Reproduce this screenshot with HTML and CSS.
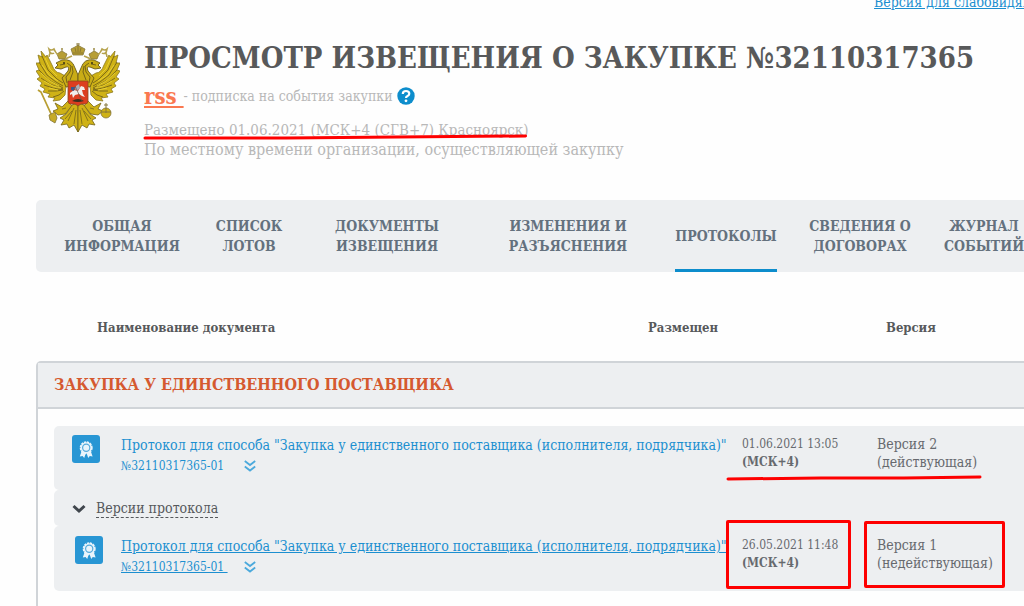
FILE: index.html
```html
<!DOCTYPE html>
<html lang="ru">
<head>
    <meta charset="UTF-8">
    <meta name="viewport" content="width=device-width, initial-scale=1.0">
    <title>Просмотр извещения о закупке №32110317365</title>
    <link rel="stylesheet" href="styles.css">
</head>
<body>
    <!-- Общие иконки -->
    <svg class="sprite" aria-hidden="true">
        <symbol id="icon-award" viewBox="0 0 28 28">
            <path d="M10 15l-2.200 6.500 2.800-.4 1.600 1.800L14.200 17l2 5.900 1.600-1.800 2.800.4-2.200-6.500z" fill="#e9f4fb"/>
            <circle cx="14.200" cy="12.800" r="5.600" fill="#e9f4fb" stroke="#e9f4fb" stroke-width="1.800" stroke-dasharray="2.200 .73"/>
            <circle cx="14.200" cy="12.800" r="3.600" fill="#e9f4fb" stroke="#56abdc" stroke-width="1.200"/>
        </symbol>
        <symbol id="icon-more" viewBox="0 0 12 12">
            <path d="M.8 1l5.200 4L11.200 1M.8 6.500l5.200 4 5.200-4" fill="none" stroke="#4ba9dc" stroke-width="1.800"/>
        </symbol>
    </svg>

    <div class="topbar">
        <a href="#">Версия для слабовидящих</a>
    </div>

    <header class="header">
        <svg class="emblem" viewBox="0 0 84 90" aria-hidden="true">
            <g id="half">
                <!-- крыло -->
                <path d="M31 34L29 52 24 57 17 58 19 55 12 54 14 51 7 49 9 46 4 43 6 40 1 36 4 34 0 28 3 27 0 20 4 20 2 12 6 14 5 8 10 14 11 12 16 22Q19 30 24 30z" fill="#cfb216" stroke="#8b7820" stroke-width=".8"/>
                <path d="M6 13l6 14 9 9 6 4M3 19l8 13 9 7 7 4M3 27l10 10 14 8M5 35l9 6 13 5M8 42l9 3 10 2M12 48l8 0 7-1M17 54l6-2 5-4" fill="none" stroke="#75641a" stroke-width=".9"/>
                <path d="M9 15l5 11 7 7M6 22l8 11 8 5M5 30l9 8 9 5M8 38l9 5 8 2M13 45l9 2" fill="none" stroke="#ead136" stroke-width=".9"/>
                <!-- шея и голова -->
                <path d="M42 42L30 44 26 35 32 28Q34 23 30 24L25 26 19 25 22 22 20 20 26 17Q36 15 39 25L42 32z" fill="#c9ac16" stroke="#6b5b18" stroke-width=".9"/>
                <path d="M31 20l4 3-1 6-4 5 1 6M36 23l1 6-3 8M24 22l5-1" fill="none" stroke="#6b5b18" stroke-width=".9"/>
                <circle cx="28" cy="20" r="1" fill="#3a3414"/>
                <!-- малая корона -->
                <path d="M23 16l-2-5 3-2 2-1 3 2 2 1-2 5z" fill="#b79e35" stroke="#85763a" stroke-width=".8"/>
                <path d="M26 5v3M25 6h2" stroke="#9b8a45" stroke-width="1"/>
                <path d="M22 12q-3-3-4-6-3 2-5 0l1 4q3 1 4 0M15 9q-2 2-2 5" fill="none" stroke="#b5a24d" stroke-width="1.600"/>
                <!-- лапа и хвост -->
                <path d="M32 58L26 64 19 60 22 66 17 68 22 72 29 71 36 63z" fill="#cfb216" stroke="#75651a" stroke-width=".8"/>
                <path d="M36 62L30 71 24 75 28 77 25 82 31 81 33 85 38 82 42 89 42 60z" fill="#cfb216" stroke="#75651a" stroke-width=".8"/>
                <path d="M38 65l-6 13M40 67l-2 14M26 66l4-1M36 68l-7 8" stroke="#75651a" stroke-width=".8"/>
            </g>
            <use href="#half" transform="translate(84 0) scale(-1 1)"/>
            <!-- большая корона -->
            <path d="M37 12l-2-6 4-2 3-2 3 2 4 2-2 6z" fill="#b79e35" stroke="#85763a" stroke-width=".8"/>
            <path d="M42 0v9M40 1h4M37 10h10M39 5l1 4M45 5l-1 4" stroke="#80702e" stroke-width=".8"/>
            <path d="M36 13l-7 3M48 13l7 3" stroke="#b5a24d" stroke-width="1.600"/>
            <!-- скипетр и держава -->
            <path d="M2 47l3 2 11 24" fill="none" stroke="#b89e32" stroke-width="1.800"/>
            <path d="M13 72l6-3 2 6-2 5-5-3z" fill="#c6ab28" stroke="#85763a" stroke-width=".8"/>
            <circle cx="70" cy="70" r="5" fill="#cfb216" stroke="#85763a" stroke-width=".8"/>
            <path d="M70 60v10M65 69h10M68 62h4" stroke="#85763a" stroke-width="1"/>
            <!-- щит -->
            <path d="M32 38h20v20q0 3-3 3h-4l-3 2-3-2h-4q-3 0-3-3z" fill="#dc3e20" stroke="#8c4b1c" stroke-width=".8"/>
            <path d="M34 50l4-3 4 1 3-5 3 1 1 3-3 0 1 4 2 3-3-1-3-2-4 1-2 3-1-4-2 1z" fill="#f1efec"/>
            <path d="M40 43l3-2 1 4-3 3-2-2z" fill="#a8afb8"/>
            <path d="M35 44l4 0-1 4-3-1z" fill="#38598a"/>
            <path d="M36 58q6-4 12 0-6 2-12 0" fill="#3d3020"/>
            <path d="M39 43l7 15" stroke="#6b5346" stroke-width=".7"/>
        </svg>
        <div class="header-text">
            <h1>ПРОСМОТР ИЗВЕЩЕНИЯ О ЗАКУПКЕ №32110317365</h1>
            <p class="subscribe">
                <a class="rss" href="#">rss&nbsp;</a>
                <span>- подписка на события закупки</span>
                <button class="help" type="button" aria-label="Справка">
                    <svg viewBox="0 0 18 18">
                        <circle cx="9" cy="9" r="8.700" fill="#0d8dcc"/>
                        <path d="M5.800 7Q5.800 4 9 4t3.300 2.700Q12.300 8 10.500 9 9 9.700 9 11" fill="none" stroke="#fff" stroke-width="2.200"/>
                        <circle cx="9" cy="13.800" r="1.400" fill="#fff"/>
                    </svg>
                </button>
            </p>
            <p class="placed">
                <span class="marked">Размещено 01.06.2021 (МСК+4 (СГВ+7) Красноярск)
                    <svg class="mark-line" viewBox="0 0 380 6" preserveAspectRatio="none" aria-hidden="true"><path d="M1 4L140 4 250 3 377 2"/></svg>
                </span>
            </p>
            <p class="local-time">По местному времени организации, осуществляющей закупку</p>
        </div>
    </header>

    <nav class="tabs">
        <a href="#">ОБЩАЯ<br>ИНФОРМАЦИЯ</a>
        <a href="#">СПИСОК<br>ЛОТОВ</a>
        <a href="#">ДОКУМЕНТЫ<br>ИЗВЕЩЕНИЯ</a>
        <a href="#">ИЗМЕНЕНИЯ И<br>РАЗЪЯСНЕНИЯ</a>
        <a class="active" href="#">ПРОТОКОЛЫ</a>
        <a href="#">СВЕДЕНИЯ О<br>ДОГОВОРАХ</a>
        <a href="#">ЖУРНАЛ<br>СОБЫТИЙ</a>
    </nav>

    <table class="columns">
        <tr>
            <th class="col-name">Наименование документа</th>
            <th class="col-date">Размещен</th>
            <th>Версия</th>
        </tr>
    </table>

    <section class="panel">
        <h2>ЗАКУПКА У ЕДИНСТВЕННОГО ПОСТАВЩИКА</h2>
        <table class="protocols">
            <tr class="current">
                <td class="cell-icon"><svg class="award"><use href="#icon-award"/></svg></td>
                <td class="cell-name">
                    <a href="#">Протокол для способа "Закупка у единственного поставщика (исполнителя, подрядчика)"<br><span class="number">№32110317365-01&nbsp;</span></a>
                    <button class="more" type="button" aria-label="Подробнее"><svg><use href="#icon-more"/></svg></button>
                </td>
                <td class="cell-date">
                    01.06.2021 13:05<br><b>(МСК+4)</b>
                    <svg class="mark-row" viewBox="0 0 258 6" preserveAspectRatio="none" aria-hidden="true"><path d="M2 4L95 3 178 3 254 2"/></svg>
                </td>
                <td class="cell-version">Версия 2<br>(действующая)</td>
            </tr>
            <tr class="versions">
                <td colspan="4">
                    <button class="toggle" type="button">
                        <svg viewBox="0 0 14 10" aria-hidden="true"><path d="M1.500 2L7 7l5.500-5" fill="none" stroke="#40464d" stroke-width="3"/></svg>
                        <span>Версии протокола</span>
                    </button>
                </td>
            </tr>
            <tr class="old">
                <td class="cell-icon"><svg class="award"><use href="#icon-award"/></svg></td>
                <td class="cell-name">
                    <a href="#">Протокол для способа "Закупка у единственного поставщика (исполнителя, подрядчика)"<br><span class="number">№32110317365-01&nbsp;</span></a>
                    <button class="more" type="button" aria-label="Подробнее"><svg><use href="#icon-more"/></svg></button>
                </td>
                <td class="cell-date">26.05.2021 11:48<br><b>(МСК+4)</b><span class="mark-box mark-date"></span></td>
                <td class="cell-version">Версия 1<br>(недействующая)<span class="mark-box mark-version"></span></td>
            </tr>
        </table>
    </section>
</body>
</html>
```
FILE: styles.css
```css
* {
    margin: 0;
    padding: 0;
    box-sizing: border-box;
}

body {
    display: flex;
    flex-direction: column;
    min-height: 100vh;
    padding-left: 36px;
    overflow-x: hidden;
    font-family: "Roboto Slab", "DejaVu Serif Condensed", "DejaVu Serif", serif;
    font-size: 14px;
    color: #66696e;
    background-color: #fefefe;
}

a {
    color: #1c8fd0;
}

button {
    border: none;
    background: none;
    font: inherit;
    cursor: pointer;
}

.sprite {
    display: none;
}

.topbar {
    display: flex;
    justify-content: flex-end;
    height: 36px;
    margin-right: -26px;
    line-height: 20px;
    white-space: nowrap;
}

.topbar a {
    margin-top: -8px;
}

/* Шапка */
.header {
    display: flex;
    gap: 24px;
    height: 164px;
}

.emblem {
    flex: none;
    width: 84px;
    height: 90px;
    margin-top: 7px;
}

.header-text {
    white-space: nowrap;
}

h1 {
    font-size: 29px;
    line-height: 44px;
    color: #58595a;
}

.subscribe {
    display: flex;
    align-items: center;
    height: 32px;
    margin-bottom: 8px;
    color: #b8b8b8;
}

.rss {
    font-size: 22px;
    font-weight: bold;
    color: #fa7850;
}

.help {
    width: 18px;
    height: 18px;
    margin-left: 4px;
}

.help svg {
    display: block;
}

.placed {
    font-size: 15px;
    line-height: 20px;
    color: #b8b8b8;
}

.local-time {
    font-size: 16px;
    line-height: 20px;
    color: #b8b8b8;
}

.marked {
    position: relative;
}

.mark-line,
.mark-row {
    position: absolute;
    fill: none;
    stroke: #fe0000;
    stroke-width: 3px;
    stroke-linecap: round;
    height: 6px;
    overflow: visible;
}

.mark-line {
    left: 0;
    bottom: -1px;
    width: 100%;
}

/* Вкладки */
.tabs {
    display: grid;
    grid-template-columns: 152fr 102fr 174fr 188fr 128fr 140fr 108fr;
    height: 72px;
    margin-right: -14px;
    padding-left: 10px;
    border-radius: 5px;
    background-color: #edeff1;
}

.tabs a {
    display: flex;
    align-items: center;
    justify-self: center;
    border-top: 3px solid transparent;
    border-bottom: 3px solid transparent;
    font-weight: bold;
    line-height: 20px;
    text-align: center;
    text-decoration: none;
    white-space: nowrap;
    color: #64717e;
}

.tabs .active {
    border-bottom-color: #0d8dcc;
}

/* Таблицы */
table {
    width: 100%;
    table-layout: fixed;
    border-collapse: separate;
    border-spacing: 0;
}

.columns {
    margin-top: 47px;
    margin-bottom: 24px;
}

.columns th {
    text-align: left;
    font-size: 13px;
    line-height: 18px;
    color: #57595b;
}

.columns .col-name {
    width: 612px;
    padding-left: 61px;
}

.columns .col-date {
    width: 238px;
}

.panel {
    flex: 1;
    margin-right: -24px;
    border: 2px solid #d0d4d8;
    border-bottom: none;
    border-radius: 5px 5px 0 0;
}

.panel h2 {
    padding-left: 16px;
    border-bottom: 2px solid #d0d4d8;
    font-size: 16px;
    line-height: 44px;
    color: #d5592f;
    background-color: #edeff1;
}

.protocols {
    margin: 17px 16px 0;
}

.protocols td {
    vertical-align: top;
    padding-top: 9px;
    line-height: 18px;
    white-space: nowrap;
    background-color: #edeff1;
}

.protocols td:first-child {
    border-radius: 5px 0 0 5px;
}

.protocols .cell-icon {
    width: 67px;
    padding-left: 18px;
}

.protocols .cell-name {
    width: 621px;
    line-height: 20px;
}

.protocols .cell-date {
    position: relative;
    width: 135px;
    font-size: 12px;
}

.protocols .cell-version {
    position: relative;
}

.current td {
    height: 64px;
}

.current .cell-name a {
    text-decoration: none;
}

.number {
    font-size: 12px;
}

.versions td {
    height: 36px;
}

.old td {
    height: 65px;
}

.protocols .old td {
    padding-top: 10px;
}

.protocols .old .cell-icon {
    padding-left: 21px;
}

.award {
    display: block;
    width: 28px;
    height: 28px;
    border-radius: 3px;
    background-color: #2896d4;
}

.more {
    margin-left: 12px;
    vertical-align: middle;
}

.more svg {
    display: block;
    width: 12px;
    height: 12px;
}

.toggle {
    display: flex;
    align-items: center;
    gap: 10px;
    padding-left: 18px;
    color: #55585c;
}

.toggle svg {
    width: 14px;
    height: 10px;
}

.toggle span {
    border-bottom: 1px dashed #55585c;
    line-height: 18px;
}

/* Красные пометки */
.mark-row {
    left: -16px;
    top: 49px;
    width: 258px;
    z-index: 1;
}

.mark-box {
    position: absolute;
    border: 3px solid #fe0000;
    border-radius: 2px;
}

.mark-date {
    left: -16px;
    top: -6px;
    width: 125px;
    height: 69px;
}

.mark-version {
    left: -13px;
    top: -5px;
    width: 141px;
    height: 67px;
}
```
